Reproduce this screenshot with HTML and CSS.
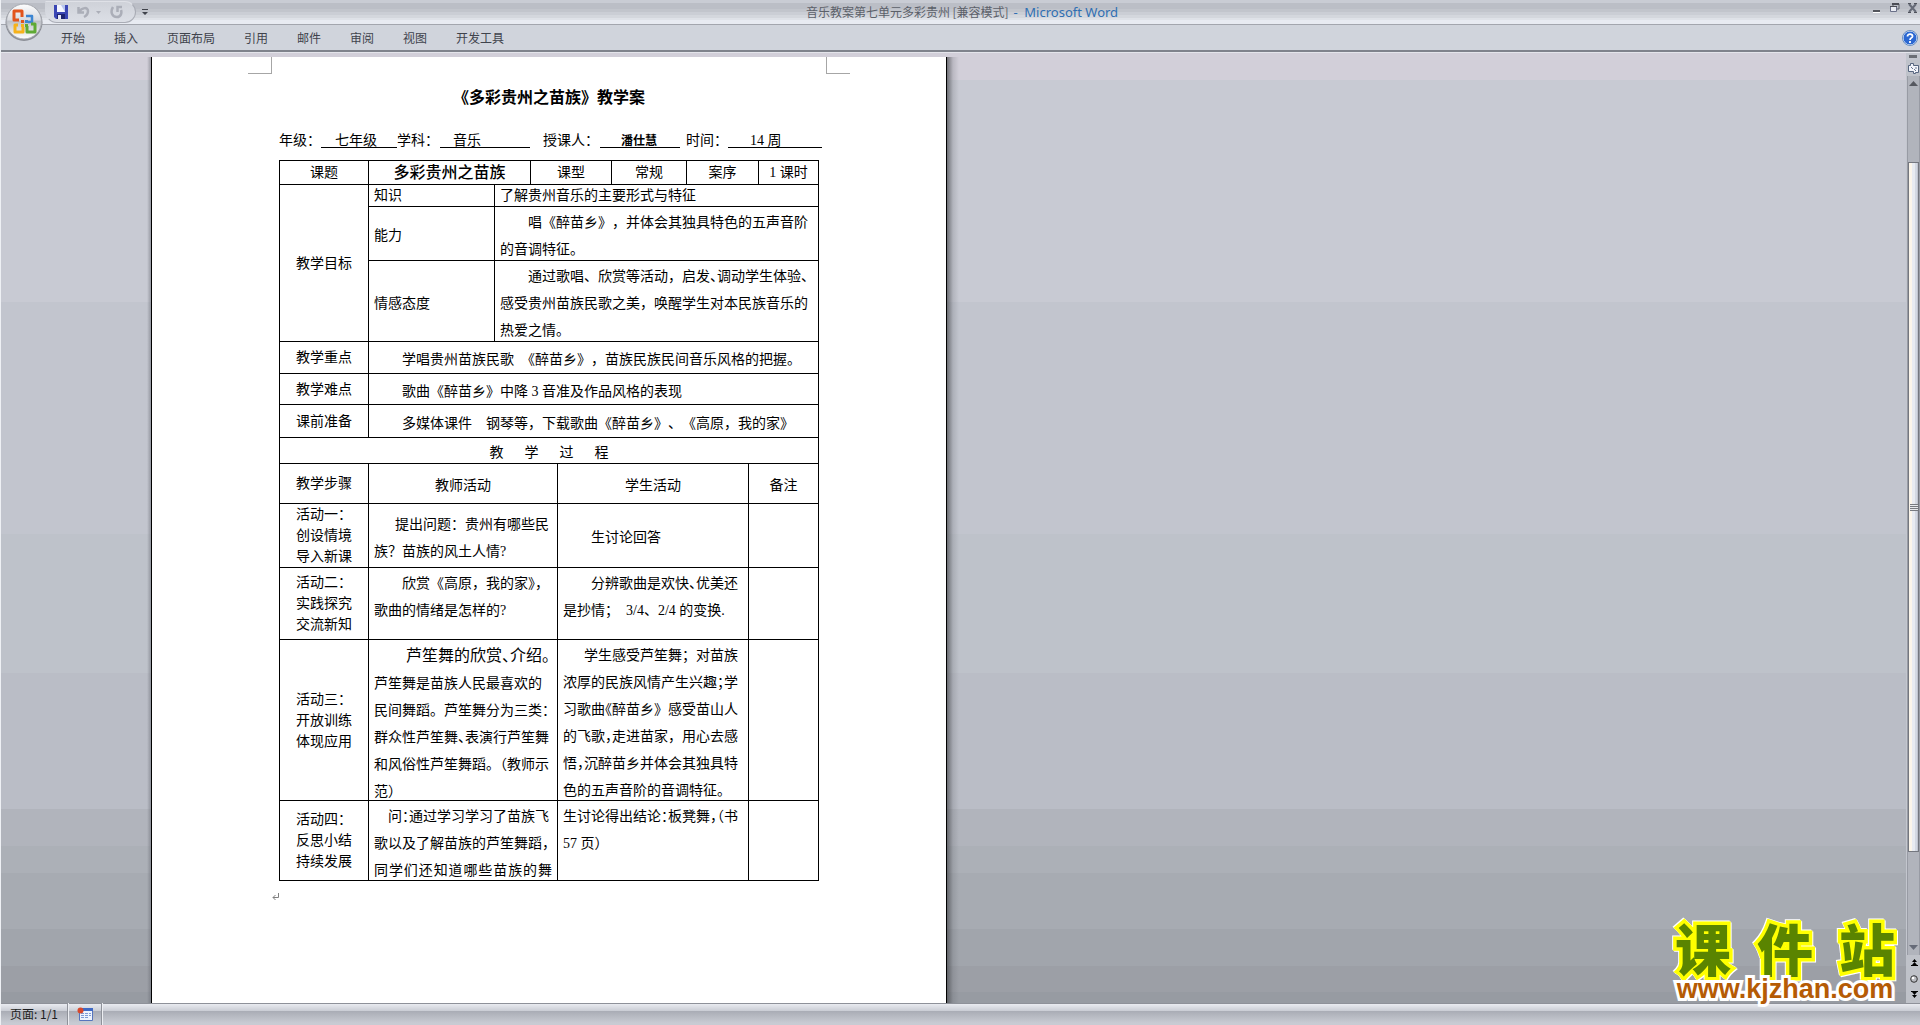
FILE: index.html
```
<!DOCTYPE html>
<html lang="zh-CN">
<head>
<meta charset="utf-8">
<title>音乐教案第七单元多彩贵州 [兼容模式] - Microsoft Word</title>
<link rel="stylesheet" href="styles.css">
</head>
<body>
<header class="titlebar">
  <button class="office" aria-label="Office">
    <svg width="40" height="40" viewBox="0 0 40 40">
      <defs>
        <linearGradient id="orb" x1="0" y1="0" x2="0" y2="1">
          <stop offset="0" stop-color="#fdfdfe"/><stop offset=".45" stop-color="#d9dbe0"/><stop offset=".5" stop-color="#bfc2c9"/><stop offset="1" stop-color="#ffffff"/>
        </linearGradient>
      </defs>
      <circle cx="20" cy="20.500" r="18.500" fill="#8b8e96"/>
      <circle cx="20" cy="19.500" r="17.500" fill="url(#orb)" stroke="#a9acb3"/>
      <g fill="none" stroke-width="3" stroke-linejoin="round">
        <path d="M18 15V9H10v9h5" stroke="#e2541c"/>
        <path d="M22 14h6v6h-4" stroke="#3d86d3" stroke-width="2.500"/>
        <path d="M14 23h-3v7h8v-5" stroke="#f6b21b"/>
        <path d="M23 24v6h8v-8h-4" stroke="#5faa35"/>
      </g>
      <path d="M17 18h3v3h-3z" fill="#e2541c"/><path d="M21 18h3v3h-3z" fill="#3d86d3"/><path d="M17 22h3v3h-3z" fill="#f6b21b"/><path d="M21 22h3v3h-3z" fill="#5faa35"/>
    </svg>
  </button>
  <div class="quick">
    <button aria-label="保存"><svg width="14" height="14" viewBox="0 0 14 14"><path d="M0 0h14v14H2l-2-2z" fill="#3a46b4"/><path d="M3 0h8v7H3z" fill="#f4f6ff"/><path d="M7 0h4v7z" fill="#b9c6ee"/><path d="M3 9h8v5H3z" fill="#1d2472"/><path d="M4 10h3v4H4z" fill="#e7e9f6"/></svg></button>
    <button aria-label="撤消"><svg width="24" height="14" viewBox="0 0 24 14"><path d="M1.500 2v5.500H7M2 7c3-5 9-5 9-1 0 3-2 5-4 6" fill="none" stroke="#abaeb8" stroke-width="2.500"/><path d="M19 6h5l-2.500 3z" fill="#abaeb8"/></svg></button>
    <button aria-label="重复"><svg width="14" height="14" viewBox="0 0 14 14"><path d="M3 2c-3 5-1 10 4 10 4 0 5-4 4-7M12 2H7.500v5" fill="none" stroke="#abaeb8" stroke-width="2.500"/></svg></button>
  </div>
  <button class="more" aria-label="自定义快速访问工具栏"><svg width="6" height="7" viewBox="0 0 6 7"><path d="M0 0h6v1H0zM0 3h6L3 6z" fill="#40434b"/></svg></button>
  <h1>音乐教案第七单元多彩贵州 [兼容模式] <span>- &nbsp;Microsoft Word</span></h1>
  <div class="window-buttons">
    <button aria-label="最小化"><svg width="10" height="10" viewBox="0 0 10 10"><path d="M1 7h7v2H1z" fill="#53555c"/><path d="M1 9h7v1H1z" fill="#fff"/></svg></button>
    <button aria-label="还原"><svg width="10" height="10" viewBox="0 0 10 10"><path d="M3 3V1h6v5H7" fill="none" stroke="#5b5e68"/><path d="M.5 3.500h6v5h-6z" fill="#e9ebf2" stroke="#6a7088"/><path d="M0 3h7v1H0zM2 0h7v2H2z" fill="#4b4d55"/></svg></button>
    <button aria-label="关闭"><svg width="10" height="10" viewBox="0 0 10 10"><path d="M1 1l7 8M8 1L1 9" stroke="#666b78" stroke-width="2"/><path d="M0 0h3v1H0zM6 0h3v1H6zM0 9h3v1H0zM6 9h3v1H6z" fill="#50535c"/></svg></button>
  </div>
</header>
<nav class="ribbon">
  <button>开始</button><button>插入</button><button>页面布局</button><button>引用</button><button>邮件</button><button>审阅</button><button>视图</button><button>开发工具</button>
  <button class="help" aria-label="帮助"><svg width="16" height="16" viewBox="0 0 16 16"><circle cx="8" cy="8" r="7" fill="#2b68d2" stroke="#e8f1fd"/><circle cx="8" cy="8" r="7.500" fill="none" stroke="#4a7ab8" stroke-width=".8"/><path d="M5.500 6.500C5.500 3 11 3.500 10.500 6.500 10 8 8 8 8 10M8 11v2" fill="none" stroke="#fff" stroke-width="1.800"/></svg></button>
</nav>
<main class="workspace">
  <div class="shade-left"></div>
  <article class="sheet">
    <div class="corners"><i class="corner-left"></i><i class="corner-right"></i></div>
    <h2>《多彩贵州之苗族》教学案</h2>
    <p class="meta">
      <span class="m1">年级：</span><u class="u1">七年级</u><span class="m2">学科：</span><u class="u2">音乐</u><span class="m3">授课人：</span><u class="u3"><b>潘仕慧</b></u><span class="m4">时间：</span><u class="u4">14 周</u>
    </p>
    <table>
      <colgroup><col class="c89"><col class="c126"><col class="c36"><col class="c27"><col class="c54"><col class="c75"><col class="c62"><col class="c10"><col class="c60"></colgroup>
      <tr class="h24"><td class="mid">课题</td><td class="mid topic" colspan="2">多彩贵州之苗族</td><td class="mid" colspan="2">课型</td><td class="mid">常规</td><td class="mid" colspan="2">案序</td><td class="mid">1 课时</td></tr>
      <tr class="h22"><td class="mid" rowspan="3">教学目标</td><td>知识</td><td colspan="7">了解贵州音乐的主要形式与特征</td></tr>
      <tr class="h54"><td class="low">能力</td><td class="top" colspan="7"><p class="lines in2">唱《醉苗乡》，并体会其独具特色的五声音阶<br>的音调特征。</p></td></tr>
      <tr class="h81"><td class="low">情感态度</td><td class="top" colspan="7"><p class="lines in2">通过歌唱、欣赏等活动，启发<i>、</i>调动学生体验、<br>感受贵州苗族民歌之美，唤醒学生对本民族音乐的<br>热爱之情。</p></td></tr>
      <tr class="h32"><td class="mid">教学重点</td><td class="low in" colspan="8">学唱贵州苗族民歌&nbsp; 《醉苗乡》，苗族民族民间音乐风格的把握。</td></tr>
      <tr class="h31"><td class="mid">教学难点</td><td class="low in" colspan="8">歌曲《醉苗乡》中降 3 音准及作品风格的表现</td></tr>
      <tr class="h33"><td class="mid">课前准备</td><td class="low in" colspan="8">多媒体课件　钢琴等，下载歌曲《醉苗乡》、《高原，我的家》</td></tr>
      <tr class="h26"><td class="mid low" colspan="9"><div class="spread"><span>教</span><span>学</span><span>过</span><span>程</span></div></td></tr>
      <tr class="h40"><td class="mid">教学步骤</td><td class="mid low" colspan="3">教师活动</td><td class="mid low" colspan="3">学生活动</td><td class="mid low" colspan="2">备注</td></tr>
      <tr class="h64"><td class="mid">活动一：<br>创设情境<br>导入新课</td><td class="low" colspan="3"><p class="lines in1 tight">提出问题：贵州有哪些民<br>族？苗族的风土人情?</p></td><td class="low in" colspan="3">生讨论回答</td><td colspan="2"></td></tr>
      <tr class="h72"><td class="mid">活动二：<br>实践探究<br>交流新知</td><td class="top" colspan="3"><p class="lines in2">欣赏《高原，我的家<i>》，</i><br>歌曲的情绪是怎样的?</p></td><td class="top" colspan="3"><p class="lines in2">分辨歌曲是欢快<i>、</i>优美还<br>是抄情；&nbsp; 3/4、2/4 的变换.</p></td><td colspan="2"></td></tr>
      <tr class="h161"><td class="mid">活动三：<br>开放训练<br>体现应用</td><td class="top" colspan="3"><p class="lines in3"><span class="large">芦笙舞的欣赏<i>、</i>介绍<i>。</i></span><br>芦笙舞是苗族人民最喜欢的<br>民间舞蹈。芦笙舞分为三类：<br>群众性芦笙舞<i>、</i>表演行芦笙舞<br>和风俗性芦笙舞蹈<i>。</i>（教师示<br>范）</p></td><td class="top" colspan="3"><p class="lines in1">学生感受芦笙舞；对苗族<br>浓厚的民族风情产生兴趣<i>；</i>学<br>习歌曲<i>《</i>醉苗乡》感受苗山人<br>的飞歌<i>，</i>走进苗家，用心去感<br>悟<i>，</i>沉醉苗乡并体会其独具特<br>色的五声音阶的音调特征。</p></td><td colspan="2"></td></tr>
      <tr class="h80"><td class="mid">活动四：<br>反思小结<br>持续发展</td><td class="top" colspan="3"><p class="lines in0">问<i>：</i>通过学习学习了苗族飞<br>歌以及了解苗族的芦笙舞蹈，</p><p class="lines last">同学们还知道哪些苗族的舞</p></td><td class="top" colspan="3"><p class="lines">生讨论得出结论<i>：</i>板凳舞<i>，（</i>书<br>57 页）</p></td><td colspan="2"></td></tr>
    </table>
    <svg class="return" width="8" height="8" viewBox="0 0 8 8"><path d="M6.500 0v4.500H1M3.500 2L1 4.500 3.500 7" fill="none" stroke="#808080"/></svg>
  </article>
  <div class="shade-right"></div>
  <aside class="scroll">
    <div class="split"></div>
    <button class="ruler" aria-label="标尺"><svg width="13" height="13" viewBox="0 0 13 13"><path d="M1.500 3.500h2v-2h3v2h5v7h-3v1h-2v-2h-5z" fill="#f3f4fa" stroke="#56657f"/><path d="M4 5l2 2M7 7l2 2M9 5v2" stroke="#6b7890"/></svg></button>
    <div class="track">
      <button class="arrow" aria-label="向上"><svg width="9" height="5" viewBox="0 0 9 5"><path d="M4.500 0L9 5H0z" fill="#55585f"/></svg></button>
      <div class="above"></div>
      <div class="thumb"><i></i></div>
      <div class="below"></div>
      <button class="arrow" aria-label="向下"><svg width="9" height="5" viewBox="0 0 9 5"><path d="M0 0h9L4.500 5z" fill="#666b78"/></svg></button>
    </div>
    <div class="browse">
      <button aria-label="前一页"><svg width="7" height="8" viewBox="0 0 7 8"><path d="M3.500 0L6 3H1zM3.500 3L6 6H1zM0 6h7v1H0z" fill="#000"/></svg></button>
      <button aria-label="选择浏览对象"><svg width="8" height="8" viewBox="0 0 8 8"><circle cx="4" cy="4" r="3.300" fill="#b9bbc1" stroke="#333"/><circle cx="3" cy="3" r="1.300" fill="#fff"/></svg></button>
      <button aria-label="下一页"><svg width="7" height="8" viewBox="0 0 7 8"><path d="M0 0h7v1H0zM1 1h5L3.500 4zM1 4h5L3.500 7z" fill="#000"/></svg></button>
    </div>
  </aside>
  <div class="watermark"><div class="brand"><span>课</span><span>件</span><span>站</span></div><div class="site">www.kjzhan.com</div></div>
</main>
<footer class="status">
  <button class="pages">页面: 1/1</button>
  <button class="macro" aria-label="录制宏"><svg width="16" height="14" viewBox="0 0 16 14"><path d="M2.500 1.500h13v12h-13z" fill="#eef3fd" stroke="#5675bd"/><path d="M2 1h14v3H2z" fill="#3f69c4"/><path d="M4 6h3v1H4zM8 6h3v1H8zM12 6h2v1h-2zM4 8h3v1H4zM8 8h3v1H8zM12 8h2v1h-2zM4 10h3v1H4zM8 10h3v1H8z" fill="#7f9bd6"/><circle cx="3.500" cy="3.500" r="3" fill="#d8472b"/></svg></button>
</footer>
</body>
</html>
```
FILE: styles.css
```
* { box-sizing: border-box; }
body {
  margin: 0;
  height: 100vh;
  display: flex;
  flex-direction: column;
  overflow: hidden;
  border-left: 1px solid #eef0f4;
  font: 12px/16px "Noto Sans CJK SC", sans-serif;
  color: #3f434c;
}
button {
  margin: 0;
  padding: 0;
  border: 0;
  background: none;
  font: inherit;
  color: inherit;
}
svg { display: block; }

/* title bar */
.titlebar {
  position: relative;
  flex: none;
  height: 25px;
  padding-left: 44px;
  display: flex;
  align-items: flex-start;
  background: linear-gradient(#c9ccd4 3px, #bbbec6 3px 9px, #c2c5cc 9px 12px, #cbced5 12px 15px, #d4d7dd 15px 18px, #dfe2e8 18px 20px, #e8ebf2 20px);
  border-bottom: 1px solid #a3a6ae;
}
.office { position: absolute; left: 3px; top: 2px; z-index: 2; }
.quick {
  width: 91px;
  height: 22px;
  margin-top: 1px;
  padding-left: 8px;
  display: flex;
  align-items: center;
  gap: 9px;
  border: 1px solid #b4b7c0;
  border-color: #dfe1e7 #a9acb5 #a9acb5 transparent;
  border-radius: 0 11px 11px 12px;
  background: linear-gradient(#cfd2d9, #dcdfe6);
}
.more { margin: 9px 0 0 6px; }
.titlebar h1 {
  flex: 1;
  margin: 0;
  padding-right: 96px;
  text-align: center;
  font-size: 12px;
  line-height: 23px;
  font-weight: 400;
  color: #5b6069;
}
.titlebar h1 span {
  margin-left: 2px;
  font-family: "Noto Sans", sans-serif;
  font-size: 13px;
  color: #2f6fb3;
}
.window-buttons { display: flex; gap: 8px; padding: 3px 2px 0 0; }

/* ribbon tabs */
.ribbon {
  flex: none;
  height: 28px;
  padding: 0 2px 2px 60px;
  display: flex;
  align-items: center;
  gap: 29px;
  background: #d0d4dc;
  border-bottom: 1px solid #e4e5eb;
  box-shadow: inset 0 -2px #7f838c;
}
.help { margin-left: auto; }

/* document area */
.workspace {
  position: relative;
  flex: 1;
  min-height: 0;
  padding-left: 146px;
  display: flex;
  background: linear-gradient(#d2cfd9 27px, #c8cad3 27px 249px, #c2c5ce 249px 481px, #bec2ca 481px 620px, #babdc6 620px 756px, #b1b4bc 756px 793px, #acb0b7 793px 820px, #a7abb2 820px 876px, #a1a5ac 876px 913px, #9c9fa6 913px 939px, #979ba2 939px);
}
.shade-left {
  width: 4px;
  margin-top: 4px;
  background: linear-gradient(to right, rgba(100, 103, 112, 0), rgba(100, 103, 112, .5));
}
.shade-right {
  width: 12px;
  margin-top: 4px;
  background: linear-gradient(to right, rgba(70, 72, 76, .7), rgba(90, 93, 100, .2) 6px, rgba(90, 93, 100, 0));
}
.sheet {
  width: 796px;
  margin-top: 4px;
  padding-left: 127px;
  background: #fff;
  border: solid #000;
  border-width: 0 1px;
  color: #000;
  font: 14px/21px "Liberation Serif", "Noto Sans CJK SC", serif;
  text-spacing-trim: space-all;
  white-space: nowrap;
}
.corners {
  display: flex;
  justify-content: space-between;
  width: 602px;
  margin-left: -31px;
}
.corners i { width: 24px; height: 17px; border: solid #a6a6a6; border-width: 0 0 1px; }
.corners .corner-left { border-right-width: 1px; }
.corners .corner-right { border-left-width: 1px; }
.sheet h2 {
  width: 540px;
  margin: 12px 0 18px;
  font-size: 16px;
  line-height: 24px;
  font-weight: 700;
  text-align: center;
}
.meta {
  display: flex;
  margin: 0 0 12px;
  line-height: 25px;
  height: 20px;
}
.meta u { text-decoration: none; border-bottom: 1px solid #000; height: 20px; }
.meta b { font-size: 12px; }
.m1 { width: 42px; }
.m2 { width: 43px; }
.m3 { width: 70px; padding-left: 13px; }
.m4 { width: 48px; padding-left: 6px; }
.u1 { width: 76px; padding-left: 14px; }
.u2 { width: 90px; padding-left: 13px; }
.u3 { width: 80px; padding-left: 21px; }
.u4 { width: 94px; padding-left: 22px; }

table {
  width: 540px;
  table-layout: fixed;
  border-collapse: collapse;
}
td { padding: 0 0 0 5px; border: 1px solid #000; }
.c89 { width: 89px; } .c126 { width: 126px; } .c36 { width: 36px; }
.c27 { width: 27px; } .c54 { width: 54px; } .c75 { width: 75px; }
.c62 { width: 62px; } .c10 { width: 10px; } .c60 { width: 60px; }
.h22 { height: 22px; } .h24 { height: 24px; } .h26 { height: 26px; }
.h31 { height: 31px; } .h32 { height: 32px; } .h33 { height: 33px; }
.h40 { height: 40px; } .h54 { height: 54px; } .h64 { height: 64px; }
.h72 { height: 72px; } .h80 { height: 80px; } .h81 { height: 81px; }
.h161 { height: 161px; }
.mid { padding-left: 0; text-align: center; }
.low { padding-top: 4px; }
.top { vertical-align: top; }
.in { padding-left: 33px; }
.topic { font-size: 16px; font-weight: 500; }
.lines { margin: 2px 0 -5px; line-height: 27px; }
.tight { margin: 0; }
.in0 { text-indent: 14px; }
.in1 { text-indent: 21px; }
.in2 { text-indent: 28px; }
.in3 { text-indent: 32px; }
.last { width: 178px; margin-top: 5px; text-align-last: justify; }
.large { font-size: 16px; }
td i { font-style: normal; font-feature-settings: "halt"; }
.spread { display: flex; justify-content: center; gap: 21px; }
.return { margin: 12px 0 0 -7px; }

/* vertical scroll bar */
.scroll {
  width: 14px;
  margin-left: auto;
  display: flex;
  flex-direction: column;
  background: #c3c6ce;
}
.split { flex: none; width: 8px; height: 3px; margin: 2px 3px; background: #6b6e75; }
.ruler { height: 16px; padding-left: 1px; background: #bfc2ca; }
.track {
  flex: 1;
  display: flex;
  flex-direction: column;
  margin-left: 1px;
  background: #b1b4bc;
  border: solid #989ba4;
  border-width: 0 1px;
}
.arrow { height: 15px; display: flex; align-items: center; justify-content: center; }
.above { flex: 71; }
.thumb {
  flex: 690;
  display: flex;
  align-items: center;
  justify-content: center;
  border: 1px solid #74777f;
  background: linear-gradient(to right, #fbf5ea 3px, #e8ebf1 3px 6px, #d3d8e2 6px 8px, #c0c4cf 8px);
}
.thumb i { width: 8px; height: 7px; background: repeating-linear-gradient(#777a80 0 1px, #e8eaee 1px 2px); }
.below { flex: 88; }
.browse {
  height: 48px;
  padding-left: 2px;
  display: flex;
  flex-direction: column;
  align-items: center;
  justify-content: space-around;
  background: #bfc2c9;
}

/* site mark over the page */
.watermark { position: absolute; right: 22px; bottom: 0; width: 226px; }
.brand {
  display: flex;
  justify-content: space-between;
  padding: 0 3px;
  font: 900 56px/56px "Noto Sans CJK SC", sans-serif;
  color: #5a8400;
  -webkit-text-stroke: 7px #ffff00;
  paint-order: stroke fill;
  filter: drop-shadow(1px 1px #fff) drop-shadow(-1px -1px #fff);
}
.site {
  position: relative;
  text-align: center;
  font: 700 27px/28px "Liberation Sans", sans-serif;
  color: #b55b05;
  -webkit-text-stroke: 6px #fff;
  paint-order: stroke fill;
}

/* status bar */
.status {
  flex: none;
  height: 22px;
  display: flex;
  background: linear-gradient(#8e9199 1px, #e9ebf0 1px, #c9ccd4 8px, #a9acb5 8px, #c8cbd3 20px);
}
.status button { height: 22px; border-right: 1px solid #8f929a; box-shadow: 1px 0 #eceef2; }
.pages { width: 67px; color: #1c1e22; }
.macro { width: 34px; padding-left: 9px; }
```
